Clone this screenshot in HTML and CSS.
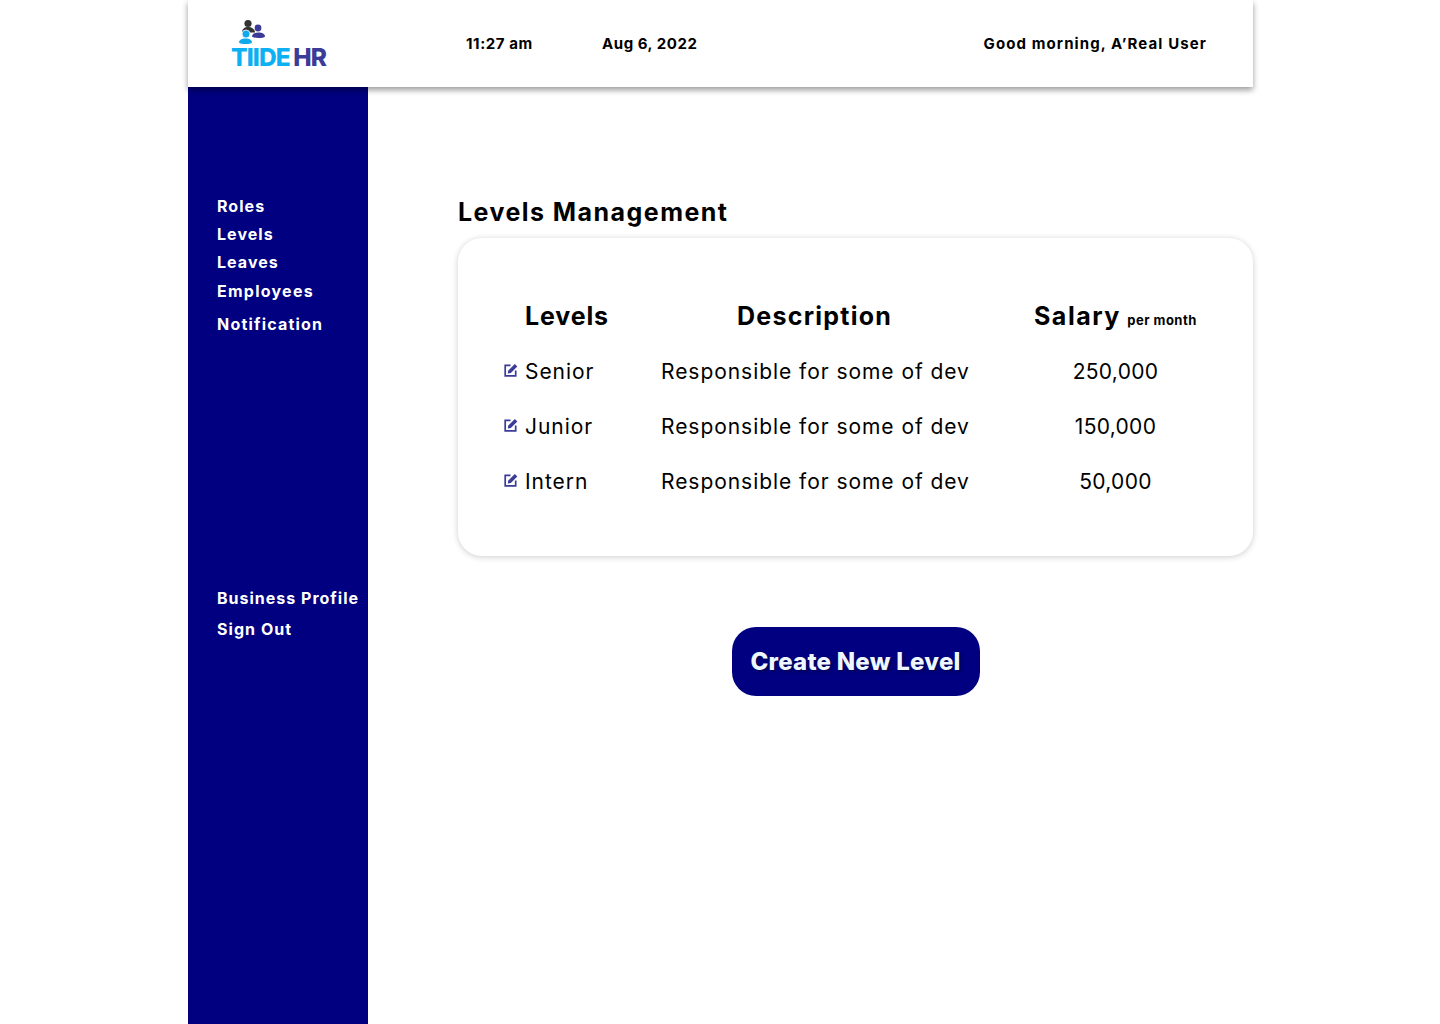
FILE: index.html
```html
<!DOCTYPE html>
<html lang="en">
<head>
    <meta charset="UTF-8">
    <meta name="viewport" content="width=device-width, initial-scale=1.0">
    <title>Levels Management</title>
    <link rel="stylesheet" href="styles.css">
</head>
<body>
    <div class="page">
        <!-- Top bar -->
        <header class="topbar">
            <div class="logo">
                <svg class="logo-mark" width="26" height="26" viewBox="0 0 26 26">
                    <circle cx="9" cy="4.500" r="3.600" fill="#333"/>
                    <path d="M3 13.500c0-3.600 2.600-5.500 6-5.500s7 1.900 7 5.500z" fill="#333"/>
                    <circle cx="19" cy="9" r="3.400" fill="#3b3b98"/>
                    <path d="M13 17.500c0-2.500 2.900-4 6.500-4s6.500 1.500 6.500 4c-1.500 2-11.500 2-13 0z" fill="#3b3b98"/>
                    <circle cx="7" cy="15" r="4" fill="#0fa9ec" stroke="#fff" stroke-width=".8"/>
                    <path d="M0 23.500c0-2.500 2.900-4 6.500-4s6.500 1.500 6.500 4c-1.500 2-11.500 2-13 0z" fill="#0fa9ec"/>
                </svg>
                <div class="logo-text"><span class="logo-tiide">TIIDE</span> <span class="logo-hr">HR</span></div>
            </div>
            <div class="clock">11:27 am</div>
            <div class="date">Aug 6, 2022</div>
            <div class="greeting">Good morning, A’Real User</div>
        </header>

        <div class="below">
            <!-- Sidebar -->
            <nav class="sidebar">
                <a class="nav-link" href="#">Roles</a>
                <a class="nav-link" href="#">Levels</a>
                <a class="nav-link" href="#">Leaves</a>
                <a class="nav-link employees" href="#">Employees</a>
                <a class="nav-link notification" href="#">Notification</a>
                <a class="nav-link business" href="#">Business Profile</a>
                <a class="nav-link signout" href="#">Sign Out</a>
            </nav>

            <main class="content">
                <h1 class="page-title">Levels Management</h1>

                <section class="card">
                    <div class="row head">
                        <div class="col-level">Levels</div>
                        <div class="col-desc">Description</div>
                        <div class="col-salary">Salary <small>per month</small></div>
                    </div>
                    <div class="row">
                        <div class="col-level">
                            <svg class="edit-icon" viewBox="0 0 14 14"><path d="M6.500 2.300H1.200v10.500h10.500V7.500" fill="none" stroke="#3b3b98" stroke-width="1.700"/><path d="M4.300 7.500 10.800.9l2.500 2.500-6.500 6.600-3 .6z" fill="#3b3b98"/></svg>
                            Senior
                        </div>
                        <div class="col-desc">Responsible for some of dev</div>
                        <div class="col-salary">250,000</div>
                    </div>
                    <div class="row">
                        <div class="col-level">
                            <svg class="edit-icon" viewBox="0 0 14 14"><path d="M6.500 2.300H1.200v10.500h10.500V7.500" fill="none" stroke="#3b3b98" stroke-width="1.700"/><path d="M4.300 7.500 10.800.9l2.500 2.500-6.500 6.600-3 .6z" fill="#3b3b98"/></svg>
                            Junior
                        </div>
                        <div class="col-desc">Responsible for some of dev</div>
                        <div class="col-salary">150,000</div>
                    </div>
                    <div class="row">
                        <div class="col-level">
                            <svg class="edit-icon" viewBox="0 0 14 14"><path d="M6.500 2.300H1.200v10.500h10.500V7.500" fill="none" stroke="#3b3b98" stroke-width="1.700"/><path d="M4.300 7.500 10.800.9l2.500 2.500-6.500 6.600-3 .6z" fill="#3b3b98"/></svg>
                            Intern
                        </div>
                        <div class="col-desc">Responsible for some of dev</div>
                        <div class="col-salary">50,000</div>
                    </div>
                </section>

                <div class="actions">
                    <button class="create-btn">Create New Level</button>
                </div>
            </main>
        </div>
    </div>
</body>
</html>
```

FILE: styles.css
```css
* {
    box-sizing: border-box;
}
body {
    margin: 0;
    font-family: Inter, "Liberation Sans", sans-serif;
    color: #000;
    background-color: #fff;
}
.page {
    width: 1065px;
    height: 1024px;
    margin-left: 188px;
    display: flex;
    flex-direction: column;
}

/* top bar */
.topbar {
    height: 87px;
    flex: none;
    display: flex;
    align-items: center;
    background-color: #fff;
    box-shadow: 0 3px 6px rgba(0, 0, 0, 0.4);
    font-size: 15px;
    font-weight: 700;
    position: relative;
}
.logo {
    width: 278px;
    padding-left: 43px;
    margin-top: 1px;
    display: flex;
    flex-direction: column;
}
.logo-mark {
    margin-left: 8px;
}
.logo-text {
    font-size: 24.500px;
    font-weight: 800;
    line-height: 24px;
    letter-spacing: -0.9px;
    white-space: nowrap;
}
.logo-tiide {
    color: #0db0f3;
}
.logo-hr {
    color: #3b3b98;
    margin-left: -1px;
}
.clock {
    width: 136px;
    letter-spacing: 0.6px;
    white-space: nowrap;
}
.date {
    letter-spacing: 0.55px;
    white-space: nowrap;
}
.greeting {
    margin-left: auto;
    padding-right: 46px;
    letter-spacing: 1.1px;
    white-space: nowrap;
}

.below {
    flex: 1;
    display: flex;
}

/* sidebar */
.sidebar {
    width: 180px;
    flex: none;
    display: flex;
    flex-direction: column;
    padding: 108px 0 0 29px;
    background-color: #000080;
}
.nav-link {
    height: 23px;
    margin-bottom: 5px;
    line-height: 23px;
    font-size: 16px;
    font-weight: 700;
    letter-spacing: 1.05px;
    color: #fff;
    text-decoration: none;
    white-space: nowrap;
}
.employees {
    margin-top: 1px;
    letter-spacing: 1.25px;
}
.notification {
    margin-top: 5px;
    letter-spacing: 1.2px;
}
.business {
    margin-top: 246px;
    margin-bottom: 8px;
    letter-spacing: 1px;
}

/* main */
.content {
    flex: 1;
    padding: 108px 0 0 90px;
}
.page-title {
    margin: 0 0 8px;
    height: 35px;
    line-height: 35px;
    font-size: 25px;
    font-weight: 700;
    letter-spacing: 1.45px;
}
.card {
    height: 318px;
    padding-top: 50px;
    border-radius: 24px;
    background-color: #fff;
    box-shadow: 0 1px 6px rgba(0, 0, 0, 0.2);
}
.row {
    height: 55px;
    padding-top: 2px;
    display: grid;
    grid-template-columns: 203px 356px 1fr;
    align-items: center;
    font-size: 21px;
    letter-spacing: 0.95px;
}
.col-level {
    position: relative;
    padding-left: 67px;
}
.col-desc {
    white-space: nowrap;
}
.col-salary {
    text-align: center;
    padding-right: 39px;
    letter-spacing: 0.3px;
    white-space: nowrap;
}
.head {
    padding-top: 0;
    font-size: 25px;
    font-weight: 700;
    letter-spacing: 1.25px;
}
.head .col-level {
    letter-spacing: 0.85px;
}
.head .col-desc {
    padding-left: 76px;
}
.head .col-salary {
    padding-right: 0;
    padding-left: 17px;
    text-align: left;
    letter-spacing: 1.5px;
}
.head small {
    font-size: 13px;
    letter-spacing: 0.5px;
    margin-left: -1px;
}
.edit-icon {
    position: absolute;
    left: 46px;
    top: 50%;
    width: 14px;
    height: 14px;
    margin-top: -9px;
}

.actions {
    display: flex;
    justify-content: center;
    margin-top: 71px;
}
.create-btn {
    width: 248px;
    height: 69px;
    border: none;
    border-radius: 24px;
    background-color: #000080;
    color: #eef6ff;
    font-family: inherit;
    font-size: 24px;
    font-weight: 800;
    letter-spacing: 0.25px;
    text-shadow: 2px 2px 3px rgba(0, 0, 0, 0.35);
}
```
